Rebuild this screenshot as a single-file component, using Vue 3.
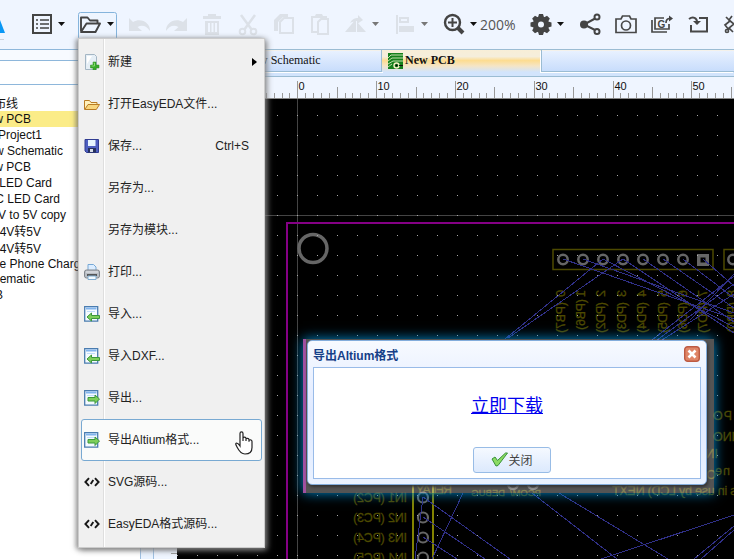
<script setup>
const range = (n) => Array.from({ length: n }, (_, i) => i)

const projects = [
  { t: '布线', end: 18, h: 15 },
  { t: 'New PCB', end: 31, h: 16, on: true },
  { t: 'Project1', end: 42, h: 16 },
  { t: 'New Schematic', end: 63, h: 16 },
  { t: 'New PCB', end: 31, h: 16 },
  { t: 'LED Card', end: 52, h: 16 },
  { t: 'C LED Card', end: 60, h: 16 },
  { t: '4V to 5V copy', end: 66, h: 16 },
  { t: '4V转5V', end: 41, h: 18 },
  { t: '4V转5V', end: 41, h: 15 },
  { t: 'Mobile Phone Charger', end: 91, h: 15 },
  { t: 'Schematic', end: 35, h: 16 },
  { t: 'PCB', end: 3, h: 16 },
]

const menu = [
  { t: '新建', icon: 'new', arrow: true },
  { t: '打开EasyEDA文件...', icon: 'open' },
  { t: '保存...', icon: 'save', key: 'Ctrl+S' },
  { t: '另存为...' },
  { t: '另存为模块...' },
  { t: '打印...', icon: 'print' },
  { t: '导入...', icon: 'import' },
  { t: '导入DXF...', icon: 'import' },
  { t: '导出...', icon: 'export' },
  { t: '导出Altium格式...', icon: 'export', on: true },
  { t: 'SVG源码...', icon: 'code' },
  { t: 'EasyEDA格式源码...', icon: 'code' },
]

const ticks = range(60).map((i) => {
  const n = i - 4
  return { n, x: Math.round(297.3 + n * 7.88) + 0.5, h: n % 10 === 0 ? 17 : n % 5 === 0 ? 11 : 5 }
})

const pads = range(7).map((i) => 563 + i * 20)
const pins = ['(PB7)', '(PB6)', '(PD2)', '(PD3)', '(PD4)', '(PD5)', '(PD6)', '(PD7)', '(PB0)']
const pinX = (i) => 564.5 + i * 20.4 + (i === 8 ? 8 : 0)
const inputs = ['IN1 (PC2)', 'IN2 (PC3)', 'IN3 (PC4)', 'IN4 (PC5)']
const wires = [
  [563, 259, 734, 319], [583, 259, 734, 313], [603, 259, 505, 339], [603, 259, 734, 327],
  [623, 259, 508, 338], [623, 259, 734, 333], [643, 259, 734, 322], [663, 259, 734, 308],
  [683, 259, 734, 298], [703, 259, 734, 286], [734, 276, 652, 340], [734, 284, 657, 340],
  [734, 294, 662, 340], [734, 274, 690, 320],
  [423, 497, 510, 559], [423, 517, 485, 559], [423, 537, 457, 559], [423, 497, 415, 559],
  [463, 493, 432, 559], [532, 493, 617, 559], [559, 493, 668, 559], [601, 559, 734, 515],
  [694, 559, 734, 526], [701, 559, 734, 530],
]
</script>

<template>
  <div class="app">
    <header class="toolbar">
      <svg width="734" height="49" viewBox="0 0 734 49">
        <path d="M0 20L5 33H0z" fill="#0a97f5" />
        <path d="M0 39.5h4" stroke="#ccd3dc" />
        <!-- document menu -->
        <g fill="none" stroke="#444" stroke-width="2">
          <rect x="33" y="15" width="18" height="18" />
          <path d="M36 20h2M36 24h2M36 28h2M40 20h9M40 24h9M40 28h9" stroke-width="1.6" />
        </g>
        <path d="M58 22h7l-3.500 4z" fill="#111" />
        <!-- open file menu -->
        <rect x="78.500" y="12.500" width="38" height="27" rx="2" fill="#eef5ff" stroke="#85b4dc" />
        <path d="M81 31V17.500h6.500l2.500 3h7.500V24M81 32l5.500-8.500H100L95.500 32z" fill="none" stroke="#444" stroke-width="1.900" stroke-linejoin="round" />
        <path d="M107 22h7l-3.500 4z" fill="#111" />
        <!-- unavailable edit tools -->
        <g fill="#dce1e8">
          <path d="M129 18v13h13l-4.500-4c5-2.500 9-1 12.500 4 .5-8-9-14-17-9zM187 18v13h-13l4.500-4c-5-2.500-9-1-12.500 4-.5-8 9-14 17-9z" />
          <path d="M203 16h5v-2h8v2h5v3h-18zM205 21h14v14h-14zM208 23v9h2v-9zM211.500 23v9h2v-9zM215 23v9h2v-9z" fill-rule="evenodd" />
          <path d="M274 20l6-6h8v3h-5l-5 5v9h-4zM311 16h4l1-2h6l1 2h4v4h-2v-2H313v13h4v2h-6z" />
          <path d="M345 32l11-13v13zM357 22l9 10h-9zM350 23c2-4 5-5 8-5v-3l5 5-6 4v-3c-3 0-5 1-7 2zM396 15h2v19h-2zM399 26h15v6h-15z" />
        </g>
        <g fill="none" stroke="#dce1e8" stroke-width="2">
          <path d="M241 15l11 15M255 15l-11 15" stroke-width="2.500" />
          <circle cx="242.500" cy="31.500" r="2.800" /><circle cx="253.500" cy="31.500" r="2.800" />
          <path d="M280 22l4-4h9v15h-13zM318 22l3-3h7v15h-10z" /><rect x="400" y="18" width="8" height="4" />
        </g>
        <path d="M372 22h7l-3.500 4zM421 22h7l-3.500 4z" fill="#777" />
        <!-- zoom -->
        <circle cx="452.500" cy="22.500" r="7.500" fill="none" stroke="#444" stroke-width="2.400" />
        <path d="M448 22.500h9M452.500 18v9" stroke="#444" stroke-width="2" /><path d="M458 28l5 5" stroke="#444" stroke-width="4" />
        <path d="M470 22h7l-3.500 4z" fill="#111" />
        <text x="480" y="30" class="zoom">200%</text>
        <!-- settings -->
        <g fill="#444"><g v-for="a in 4" :key="a" :transform="`rotate(${a * 45} 541 24.500)`"><path d="M539 14h4l1.500 5h-7zM539 35h4l1.500-5h-7z" /></g></g>
        <circle cx="541" cy="24.500" r="5.500" fill="none" stroke="#444" stroke-width="5" />
        <path d="M557 22h7l-3.500 4z" fill="#111" />
        <!-- share -->
        <path d="M597 17.500L584 24.500l13 6.500" fill="none" stroke="#444" stroke-width="2" />
        <circle cx="584" cy="24.500" r="4" fill="#444" />
        <g fill="#eff5ff" stroke="#444" stroke-width="2"><circle cx="597" cy="17" r="2.500" /><circle cx="597" cy="31.500" r="2.500" /></g>
        <!-- capture and document export -->
        <g fill="none" stroke="#484848" stroke-width="1.700">
          <path d="M616 19h5l1.500-3h7l1.500 3h5v13.500h-20z" /><circle cx="626" cy="25.500" r="4.500" />
          <path d="M664 18h-9v11h14v-5M652 20v12h15" /><path d="M666 23c0-3 2-4.500 4-4.500" />
          <path d="M699 18h8v13.500h-16V25" stroke-width="2" /><path d="M689 19c4-3 8-1 8 3" stroke-width="2" />
          <path d="M726 17l4 4-5 4 4 5M732 16l-3 4 5 4-5 4 4 4" />
          <circle cx="727" cy="31" r="1.500" />
        </g>
        <path d="M669 15.500l4 3-4 3zM693 21h8l-4 4z" fill="#444" />
        <text x="657.500" y="27.500" class="gmark">G</text>
      </svg>
    </header>

    <div class="body">
      <aside class="side">
        <div class="side-head"></div>
        <div class="search"></div>
        <div class="tree">
          <div v-for="(p, i) in projects" :key="i" class="project" :class="{ on: p.on }" :style="{ height: p.h + 'px' }">
            <span class="name" :style="{ width: p.end + 'px' }">{{ p.t }}</span>
          </div>
        </div>
      </aside>
      <div class="splitter"></div>
      <main class="editor">
        <nav class="tabs">
          <div class="tab first">New Schematic</div>
          <div class="tab current">
            <svg width="15" height="16" viewBox="0 0 15 16">
              <path d="M0 0h15v16H0z" fill="#15801b" />
              <path d="M0 5l3-3h12M0 8l4-3h11M0 11l5-3h10M0 14l4-3" fill="none" stroke="#c3dfad" />
              <circle cx="8.500" cy="12.500" r="2.500" fill="#15801b" stroke="#f4eec4" stroke-width="1.400" /><path d="M11 12.500h4" stroke="#111" /><circle cx="8.500" cy="12.500" r="1" />
            </svg>New PCB
          </div>
          <div class="tab rest"></div>
        </nav>
        <svg class="ruler" width="580" height="22" viewBox="154 77 580 22">
          <g v-for="k in ticks" :key="k.n">
            <path :d="`M${k.x} ${98 - k.h}V98`" stroke="#999" />
            <text v-if="k.n % 10 === 0" :x="k.x + 1" y="90" class="scale">{{ k.n }}</text>
          </g>
          <path d="M154 98.500h580" stroke="#888" />
        </svg>
        <div class="workspace">
          <svg class="vruler" width="23" height="460" viewBox="154 99 23 460">
            <path v-for="i in 58" :key="i" :d="`M171 ${Math.round(553.500 - (i - 1) * 7.88) - 0.500}h6`" stroke="#999" />
          </svg>
          <svg class="board" width="557" height="460" viewBox="177 99 557 460">
            <defs>
              <pattern id="grid" x="177" y="95" width="20" height="20" patternUnits="userSpaceOnUse"><rect width="1" height="1" fill="#aaa" /></pattern>
            </defs>
            <path d="M177 99h557v460H177z" />
            <path d="M297.500 99v460M177 215.500h557" stroke="#444" />
            <g class="silk">
              <g v-for="(p, i) in pins" :key="p">
                <text :transform="`translate(${pinX(i)} 290) scale(-1 1) rotate(90)`">{{ i }}</text>
                <text :transform="`translate(${pinX(i)} ${i === 1 ? 299 : 302}) scale(-1 1) rotate(90)`" textLength="31">{{ p }}</text>
              </g>
              <text v-for="(p, i) in inputs" :key="p" :transform="`translate(407 ${501.500 + i * 20}) scale(-1 1)`" textLength="54">{{ p }}</text>
              <text transform="translate(452 494) scale(-1 1)" textLength="36">RELAY</text>
              <text transform="translate(541 496) scale(-1 1)" class="tight">PCOM/</text>
              <text transform="translate(505 496) scale(-1 1)" class="tight">DEBUG</text>
              <text transform="translate(765 420) scale(-1 1)" textLength="52">FOR PO</text>
              <text transform="translate(770 441) scale(-1 1)" textLength="57">ARDUINO</text>
              <text transform="translate(718 458) scale(-1 1)">IN</text>
              <text transform="translate(762 475) scale(-1 1)" textLength="47">may ne</text>
              <text transform="translate(716 479) scale(-1 1)">O</text>
              <text transform="translate(739 495) scale(-1 1)" textLength="127">is in use by LCD) NEXT</text>
            </g>
            <g fill="none" stroke="#4d4a00" stroke-width="1.500"><rect x="553" y="249.500" width="160" height="20" /><path d="M740 249.500H724v20h16" /></g>
            <path d="M413 485v74M433 485v74" stroke="#838300" stroke-width="2" />
            <path d="M287 559V223h447" fill="none" stroke="#850085" stroke-width="2" />
            <g fill="none" stroke="#666">
              <circle cx="313" cy="248.500" r="14" stroke-width="3.500" />
              <circle v-for="x in pads" :key="x" :cx="x" cy="259.500" r="4.700" stroke-width="2.500" />
              <circle cx="733" cy="259.500" r="4.700" stroke-width="2.500" />
              <circle v-for="i in 4" :key="i" cx="423" :cy="477.500 + i * 20" r="5" stroke-width="2.200" />
              <circle cx="513" cy="484" r="5" stroke-width="2.500" /><circle cx="533" cy="484" r="5" stroke-width="2.500" />
            </g>
            <path d="M697 254h12v12h-12zM700.500 257.500v5h5v-5z" fill="#666" fill-rule="evenodd" />
            <path v-for="(w, i) in wires" :key="i" :d="`M${w[0]} ${w[1]}L${w[2]} ${w[3]}`" stroke="#303088" stroke-width="1" shape-rendering="crispEdges" />
            <path d="M177 99h557v460H177z" fill="url(#grid)" />
          </svg>
        </div>
      </main>
    </div>

    <div class="menu">
      <div v-for="(m, i) in menu" :key="i" class="item" :class="{ on: m.on }">
        <span class="glyph">
          <svg v-if="m.icon" width="16" height="16" viewBox="0 0 16 16">
            <g v-if="m.icon === 'new'">
              <path d="M1.500.5h9l2 2v13h-11z" fill="#e6eff6" stroke="#a4b6c4" /><path d="M3 2h5L3 10z" fill="#fff" />
              <path d="M9 8h3v3h3v3h-3v2.500H9V14H6.500v-3H9z" fill="#39a92c" stroke="#2c8922" stroke-width=".5" /><path d="M9.500 9h1v3h-3" fill="none" stroke="#87dc6f" />
            </g>
            <g v-else-if="m.icon === 'open'" stroke="#b97c25" stroke-linejoin="round">
              <path d="M.5 13.500v-9h5l1.500 2h6v2" fill="#fff1bc" /><path d="M.8 13.500l3.200-5h11.500l-3.200 5z" fill="#f8d67e" />
            </g>
            <g v-else-if="m.icon === 'save'">
              <path d="M1 1.500h13.500v13H2.500L1 13z" fill="#4e5fc0" stroke="#303c91" /><path d="M4 2h7.500v6H4z" fill="#e8f6ff" /><path d="M4 10h8v4.500H4z" fill="#26315c" /><path d="M6 11h3v3H6z" fill="#d6dce7" />
            </g>
            <g v-else-if="m.icon === 'print'">
              <path d="M4 7V.5h5.500L12 3v4" fill="#dcedff" stroke="#76a8d6" /><rect x=".5" y="6" width="15" height="8" rx="2" fill="#b9bec4" stroke="#81868c" /><path d="M2 8h12" stroke="#e8eaee" /><path d="M3 11h10" stroke="#333" stroke-width="1.500" /><path d="M4 12h8v3.500H4z" fill="#f2faff" stroke="#80add0" />
            </g>
            <g v-else-if="m.icon === 'code'" fill="none" stroke="#171717" stroke-width="1.900">
              <path d="M5 4.200L1.400 8 5 11.800M11 4.200L14.600 8 11 11.800M9.300 6L6.700 10" />
            </g>
            <g v-else>
              <path d="M.7.700h13v14.500h-13z" fill="#f5faff" stroke="#4a7caf" stroke-width="1.300" /><path d="M2 2.500h10.500" stroke="#81b4ed" stroke-width="2" /><path d="M3 5.500h8" stroke="#bfdcf9" />
              <path :d="m.icon === 'import' ? 'M3 11l4.500-4v2.500h8v3h-8V15z' : 'M15.500 9L11 5v2.500H4v3.500h7v2.500z'" fill="#7dce5a" stroke="#3b983b" />
            </g>
          </svg>
        </span>
        <span class="label">{{ m.t }}</span>
        <span class="key">{{ m.key }}</span>
        <svg v-if="m.arrow" class="more" width="5" height="8" viewBox="0 0 5 8"><path d="M0 0l5 4-5 4z" /></svg>
      </div>
    </div>

    <div class="shade"></div>
    <section class="dialog">
      <div class="title"><span>导出Altium格式</span>
        <svg width="16" height="16" viewBox="0 0 16 16"><rect x=".7" y=".7" width="14.600" height="14.600" rx="3" fill="#df8567" stroke="#bd5a42" stroke-width="1.400" /><path d="M4.500 4.500l7 7M11.500 4.500l-7 7" stroke="#fff" stroke-width="2.600" /></svg>
      </div>
      <div class="content">
        <a class="download">立即下载</a>
        <button class="close"><svg width="17" height="15" viewBox="0 0 17 15"><path d="M1 7l3-2 2.500 3.500L14.500 1h2L7 13.500 5 14z" fill="#8cdb62" stroke="#37923a" stroke-linejoin="round" /></svg>关闭</button>
      </div>
    </section>

    <svg class="cursor" width="18" height="24" viewBox="0 0 18 24">
      <path d="M5 15V2.500C5 .3 8 .3 8 2.500V10 7.500c0-2 3-1.700 3 0V10 8.500c0-1.700 3-1.500 3 .3v2-1c0-1.600 3-1.300 3 .7v6c0 4-2 6.500-7 6.500-4 0-6-3-8-7-1-2-2-3.500-.5-4C3 12 4 13.500 5 15z" fill="#fff" stroke="#222" stroke-width="1.200" />
    </svg>
  </div>
</template>

<style>
body { margin: 0; overflow: hidden; }
</style>
<style scoped>
.app { position: relative; width: 734px; height: 559px; overflow: hidden; display: flex; flex-direction: column; background: #eff5ff; font: 12px "Liberation Sans", "Noto Sans CJK SC", sans-serif; color: #222; }
svg { display: block; flex: none; }
.toolbar { height: 49px; flex: none; }
.zoom { font: 14px "Open Sans", sans-serif; fill: #555; }
.gmark { font: bold 10px "Liberation Sans", sans-serif; fill: #444; }
.body { display: flex; height: 510px; }
.side { width: 140px; background: #fff; overflow: hidden; border-top: 1px solid #8eb7db; box-sizing: border-box; }
.side-head { height: 10px; background: #f7faff; border-bottom: 1px solid #8eb7db; }
.search { height: 23px; border-bottom: 1px solid #8eb7db; }
.tree { padding-top: 11px; }
.project { display: flex; align-items: center; overflow: hidden; }
.project.on { background: #fbec88; }
.name { display: flex; flex: none; justify-content: flex-end; white-space: nowrap; line-height: 16px; color: #111; }
.splitter { width: 14px; box-sizing: border-box; border: solid #9dbfe1; border-width: 0 1px; background: #eaf3ff; }
.editor { width: 580px; display: flex; flex-direction: column; }
.tabs { height: 28px; box-sizing: border-box; display: flex; align-items: flex-start; background: #d2e4fc; border-top: 1px solid #9bbcd3; border-bottom: 1px solid #9bbcd3; font: 12px/20px "Liberation Serif", serif; color: #111; }
.tab { height: 22px; box-sizing: border-box; border: solid #9bbcd3; border-width: 0 1px 1px 0; background: linear-gradient(#eaf2ff, #c8ddfc); box-shadow: 1px 1px #fff, inset 0 1px #f4f1ea; }
.first { width: 228px; padding-left: 91px; }
.current { width: 159px; display: flex; gap: 2px; padding: 0 0 0 6px; font-weight: bold; border: 0; background: linear-gradient(#f8eed7, #f5eedc 30%, #fddc91 48%, #f5e5c5 72%, #d2e4fc); box-shadow: none; }
.current svg { margin-top: 3px; }
.rest { flex: 1; border-width: 0 0 1px 1px; box-shadow: -1px 1px #fff, inset 0 1px #f4f1ea; }
.scale { font: 11px "Liberation Sans", sans-serif; fill: #111; }
.workspace { display: flex; }
.silk { font: 12.5px "Liberation Sans", sans-serif; fill: #4d4900; stroke: #4d4900; stroke-width: .3px; }
.tight { font-size: 9.5px; }
.menu { position: absolute; left: 78px; top: 38px; width: 187px; height: 510px; box-sizing: border-box; padding: 2px; border: 1px solid #ccc; background: linear-gradient(90deg, #f0f0f0 24px, #dedede 24px, #dedede 25px, #fff 25px, #fff 26px, #f0f0f0 26px); box-shadow: 2px 2px 6px #888, -2px 1px 5px rgba(80, 80, 80, .6); }
.item { display: flex; align-items: center; height: 42px; box-sizing: border-box; border: 1px solid transparent; border-radius: 3px; padding: 0 8px 0 2px; white-space: nowrap; }
.item.on { background: #fafbfa; border-color: #78a9d2; }
.glyph { width: 24px; flex: none; }
.label { flex: 1; line-height: 18px; }
.key { margin-right: 4px; }
.more { margin-right: -4px; }
.shade { position: absolute; left: 303px; top: 339px; width: 411px; height: 154px; box-sizing: border-box; border-left: 3px solid #a050a0; background: rgba(255, 255, 255, .33); box-shadow: 0 0 12px #008bcf; }
.dialog { position: absolute; left: 307px; top: 340px; width: 400px; height: 145px; box-sizing: border-box; padding: 0 5px 5px; border: 1px solid #83addc; border-radius: 5px; display: flex; flex-direction: column; background: linear-gradient(#f7faff, #dfe9ff 50%, #eaf2ff); box-shadow: 1px 2px 3px #333; }
.title { height: 26px; display: flex; align-items: center; justify-content: space-between; padding-right: 1px; color: #163f88; font-weight: bold; }
.content { height: 112px; box-sizing: border-box; display: flex; flex-direction: column; align-items: center; flex: none; padding-top: 25px; background: #fff; border: 1px solid #99bbe8; }
.download { font-size: 18px; line-height: 27px; color: #00e; text-decoration: underline; }
.close { width: 78px; height: 26px; margin: 27px 0 0 10px; padding: 0 0 2px; display: flex; align-items: center; justify-content: center; font: 12px "Liberation Sans", "Noto Sans CJK SC", sans-serif; color: #444; border: 1px solid #98bce6; border-radius: 3px; background: linear-gradient(#f5f9ff, #dce9fd); }
.cursor { position: absolute; left: 235px; top: 431px; }
</style>
